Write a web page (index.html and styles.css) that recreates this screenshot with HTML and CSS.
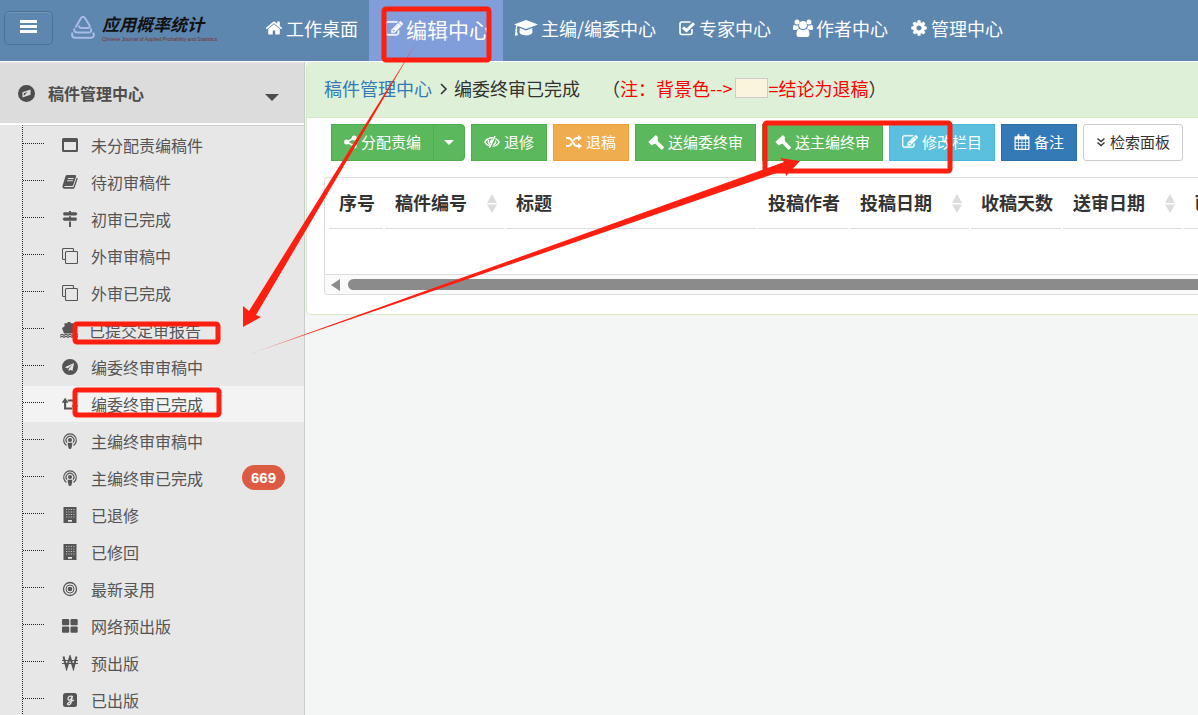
FILE: index.html
```html
<!DOCTYPE html>
<html lang="zh-CN">
<head>
  <meta charset="UTF-8" />
  <meta name="viewport" content="width=device-width, initial-scale=1.0" />
  <title>编辑中心 - 应用概率统计</title>
  <link rel="stylesheet" href="styles.css">
</head>
<body>
  <!-- 图标 -->
  <svg class="sprite" aria-hidden="true">
    <symbol id="i-home" viewBox="0 0 1792 1792"><path d="M1472 992v480q0 26-19 45t-45 19h-384v-384h-256v384h-384q-26 0-45-19t-19-45v-480q0-1 .5-3t.5-3l575-474 575 474q1 2 1 6zm223-69l-62 74q-8 9-21 11h-3q-13 0-21-7l-692-577-692 577q-12 8-24 7-13-2-21-11l-62-74q-8-10-7-23.5t11-21.5l719-599q32-26 76-26t76 26l244 204v-195q0-14 9-23t23-9h192q14 0 23 9t9 23v408l219 182q10 8 11 21.5t-7 23.5z"/></symbol>
    <symbol id="i-edit" viewBox="0 0 1792 1792"><path stroke="currentColor" stroke-width="40" d="M888 1184l116-116-152-152-116 116v56h96v96h56zm440-720q-16-16-33 1l-350 350q-17 17-1 33t33-1l350-350q17-17 1-33zm80 594v190q0 119-84.5 203.5t-203.5 84.5h-832q-119 0-203.5-84.5t-84.5-203.5v-832q0-119 84.5-203.5t203.5-84.5h832q63 0 117 25 15 7 18 23 3 17-9 29l-49 49q-14 14-32 8-23-6-45-6h-832q-66 0-113 47t-47 113v832q0 66 47 113t113 47h832q66 0 113-47t47-113v-126q0-13 9-22l64-64q15-15 35-7t20 29zm-96-738l288 288-672 672h-288v-288zm444 132l-92 92-288-288 92-92q28-28 68-28t68 28l152 152q28 28 28 68t-28 68z"/></symbol>
    <symbol id="i-cog" viewBox="0 0 1792 1792"><path d="M1152 896q0-106-75-181t-181-75-181 75-75 181 75 181 181 75 181-75 75-181zm512-109v222q0 12-8 23t-20 13l-185 28q-19 54-39 91 35 50 107 138 10 12 10 25t-9 23q-27 37-99 108t-94 71q-12 0-26-9l-138-108q-44 23-91 38-16 136-29 186-7 28-36 28h-222q-14 0-24.5-8.5t-11.5-21.5l-28-184q-49-16-90-37l-141 107q-10 9-25 9-14 0-25-11-126-114-165-168-7-10-7-23 0-12 8-23 15-21 51-66.5t54-70.5q-27-50-41-99l-183-27q-13-2-21-12.5t-8-23.5v-222q0-12 8-23t19-13l186-28q14-46 39-92-40-57-107-138-10-12-10-24 0-10 9-23 26-36 98.5-107.5t94.5-71.5q13 0 26 10l138 107q44-23 91-38 16-136 29-186 7-28 36-28h222q14 0 24.5 8.5t11.5 21.5l28 184q49 16 90 37l142-107q9-9 24-9 13 0 25 10 129 119 165 170 7 8 7 22 0 12-8 23-15 21-51 66.5t-54 70.5q26 50 41 98l183 28q13 2 21 12.5t8 23.5z"/></symbol>
    <symbol id="i-cap" viewBox="0 0 24 18"><path d="M12 1 24 5.500 12 10 4 7C3 7.500 2.900 9 2.900 10.200 3.600 10.700 3.600 11.500 3 12L3.800 16.500H.800L1.600 12C1 11.500 1 10.700 1.700 10.200 1.700 8.700 1.900 7.300 2.600 6.500L0 5.500ZM5.800 9 12 11.400 18.200 9 18.500 13C18.500 15 15.500 16.400 12 16.400S5.500 15 5.500 13Z"/></symbol>
    <symbol id="i-check" viewBox="0 0 18 18"><path d="M14 10V13.500A2 2 0 0 1 12 15.500H4A2 2 0 0 1 2 13.500V5A2 2 0 0 1 4 3H12.500" fill="none" stroke="currentColor" stroke-width="1.600"/><path d="M5 8.300 8.500 11.500 16 4.200" fill="none" stroke="currentColor" stroke-width="3"/></symbol>
    <symbol id="i-users" viewBox="0 0 20 18"><circle cx="10" cy="6" r="3.900"/><circle cx="4" cy="3" r="2.500"/><circle cx="16" cy="3" r="2.500"/><path d="M0 9.500C0 7 .5 5.800 1.500 5.800 3 7 4.500 6.600 5.300 6.300 5 8 5.700 9.200 6.200 9.800 5 9.800 4 10.500 3.500 11H1.500C.5 11 0 10.500 0 9.500ZM20 9.500C20 7 19.500 5.800 18.500 5.800 17 7 15.500 6.600 14.700 6.300 15 8 14.300 9.200 13.800 9.800 15 9.800 16 10.500 16.500 11H18.500C19.500 11 20 10.500 20 9.500ZM6.500 10C8.500 11.500 11.500 11.500 13.500 10 15.800 10 16.500 12.500 16.500 15.500 16.500 17 15.600 18 14.200 18H5.800C4.400 18 3.500 17 3.500 15.500 3.500 12.500 4.200 10 6.500 10Z"/></symbol>
    <symbol id="i-compass" viewBox="0 0 16 16"><path fill-rule="evenodd" d="M8 0A8 8 0 1 1 8 16 8 8 0 0 1 8 0ZM4.200 6.800V11.800L11.800 9.200V4.200ZM5.500 10V7.800L9 6.600Z"/></symbol>
    <symbol id="i-share" viewBox="0 0 14 14"><circle cx="2.800" cy="7" r="2.700"/><circle cx="11" cy="2.800" r="2.700"/><circle cx="11" cy="11.200" r="2.700"/><path d="M11 2.800 3 7 11 11.200" fill="none" stroke="currentColor" stroke-width="1.800"/></symbol>
    <symbol id="i-eye" viewBox="0 0 16 14"><path d="M6 11.300C3.500 10.600 1.700 8.600 .8 7 2.300 4.500 5 2.700 8 2.700L9.300 2.900M11.500 3.500C13.200 4.400 14.500 5.700 15.200 7 14 9.300 11.500 11.200 8.500 11.400" fill="none" stroke="currentColor" stroke-width="1.400"/><path d="M4.700 4.500C4 6.500 4.500 8.800 6.300 9.800M11.600 5.500C11.900 7.600 11 9.300 9.300 10" fill="none" stroke="currentColor" stroke-width="1.300"/><path d="M11 1 5.500 12.800M7.800 4.500 6 7.800" fill="none" stroke="currentColor" stroke-width="1.500"/></symbol>
    <symbol id="i-random" viewBox="0 0 16 14"><path d="M0 3H2.500C6.500 3 6.800 11 11 11H13M0 11H2.500C4 11 4.800 10 5.600 8.600M7.400 5.400C8.200 4 9.200 3 11 3H13" fill="none" stroke="currentColor" stroke-width="2"/><path d="M12 0 16 3 12 6ZM12 8 16 11 12 14Z"/></symbol>
    <symbol id="i-gavel" viewBox="0 0 16 16"><path d="M7.800 1 10.300 3.500 9.600 4.200 10 7.200 15.500 12.600C16 13.200 16 13.800 15.500 14.300L14.600 15.200C14 15.700 13.400 15.700 12.900 15.200L7.500 9.700 6.500 9.800 3.800 11.500 .4 8 1 7.300 6.900 1.900Z"/></symbol>
    <symbol id="i-calendar" viewBox="0 0 15 16"><path fill-rule="evenodd" d="M1 2.200H3V1Q3 0 4 0T5 1V2.200H10V1Q10 0 11 0T12 1V2.200H14Q15 2.200 15 3.200V15Q15 16 14 16H1Q0 16 0 15V3.200Q0 2.200 1 2.200ZM1.200 5.500V7.900H3.700V5.500ZM4.500 5.500V7.900H7.100V5.500ZM7.900 5.500V7.900H10.500V5.500ZM11.300 5.500V7.900H13.800V5.500ZM1.200 8.700V11.300H3.700V8.700ZM4.500 8.700V11.300H7.100V8.700ZM7.900 8.700V11.300H10.500V8.700ZM11.300 8.700V11.300H13.800V8.700ZM1.200 12.100V14.800H3.700V12.100ZM4.500 12.100V14.800H7.100V12.100ZM7.900 12.100V14.800H10.500V12.100ZM11.300 12.100V14.800H13.800V12.100Z"/></symbol>
    <symbol id="i-down" viewBox="0 0 10 10"><path d="M1.500 1.500 5 4.500 8.500 1.500M1.500 5.500 5 8.500 8.500 5.500" fill="none" stroke="currentColor" stroke-width="1.400"/></symbol>
    <symbol id="i-window" viewBox="0 0 16 16"><path fill-rule="evenodd" d="M1.500 1H14.500Q16 1 16 2.500V13.500Q16 15 14.500 15H1.500Q0 15 0 13.500V2.500Q0 1 1.500 1ZM2 5V13H14V5Z"/></symbol>
    <symbol id="i-book" viewBox="0 0 16 16"><path fill-rule="evenodd" d="M5 1H13Q14.500 1.200 14 2.800L11.300 11Q11 12 10 12H2.500Q1.500 12.500 3 13H11.500L14.800 3.500Q16 4 15.500 5.200L12.800 13.300Q12.300 14.800 11 14.800H2.500Q0 14.300 .5 11.800L3.500 2.200Q4 1 5 1ZM6 4 5.700 5H11.500L11.800 4ZM5.300 6.300 5 7.300H10.800L11.100 6.300Z"/></symbol>
    <symbol id="i-signs" viewBox="0 0 16 16"><path d="M7 0H9V1.200H14L15.500 2.700 14 4.400H2Q1.300 4.400 1.300 3.700V1.900Q1.300 1.200 2 1.200H7ZM7 5.200H9V6.400H14Q14.700 6.400 14.700 7.100V9Q14.700 9.700 14 9.700H2L.5 8.100 2 6.400H7ZM7 10.500H9V16H7Z"/></symbol>
    <symbol id="i-clone" viewBox="0 0 16 16"><path d="M3.500 11.500H1.500A1 1 0 0 1 .5 10.500V1.500A1 1 0 0 1 1.500 .5H10.500A1 1 0 0 1 11.500 1.500V3.500M4.500 3.500H14.500A1 1 0 0 1 15.500 4.500V14.500A1 1 0 0 1 14.500 15.500H4.500A1 1 0 0 1 3.500 14.500V4.500A1 1 0 0 1 4.500 3.500Z" fill="none" stroke="currentColor" stroke-width="1.100"/></symbol>
    <symbol id="i-ship" viewBox="0 0 18 16"><path d="M7.500 0H10.500V1.200H13.500V4.500L16 6 14 11.500H4L2 6 4.500 4.500V1.200H7.500Z"/><path d="M0 13.300 2 12.300 4 13.300 6 12.300 8 13.300 10 12.300 12 13.300 14 12.300 16 13.300 18 12.300M0 15.300 2 14.300 4 15.300 6 14.300 8 15.300 10 14.300 12 15.300 14 14.300 16 15.300 18 14.300" fill="none" stroke="currentColor" stroke-width="1.200"/></symbol>
    <symbol id="i-plane" viewBox="0 0 16 16"><path fill-rule="evenodd" d="M8 0A8 8 0 1 1 8 16 8 8 0 0 1 8 0ZM12 4 3 8.300 5.600 9.400 10.300 5.800 6.700 9.900V12.500L8.100 10.700 10.500 11.700Z"/></symbol>
    <symbol id="i-retweet" viewBox="0 0 18 14"><path d="M3.500 4V12H11.500M6.500 3H14.500V10" fill="none" stroke="currentColor" stroke-width="2.400"/><path d="M3.500 0 7.300 5.500H-.3ZM14.500 14 10.700 8.500H18.300Z"/></symbol>
    <symbol id="i-podcast" viewBox="0 0 16 16"><path d="M4.500 12.500A6.300 6.300 0 1 1 11.500 12.500M5 9.700A3.900 3.900 0 1 1 11 9.700" fill="none" stroke="currentColor" stroke-width="1.200"/><circle cx="8" cy="7" r="2"/><path d="M6.500 9.800H9.500Q10.500 9.800 10.300 11L9.500 15Q9.300 16 8 16T6.500 15L5.700 11Q5.500 9.800 6.500 9.800Z"/></symbol>
    <symbol id="i-building" viewBox="0 0 14 16"><path fill-rule="evenodd" d="M.5 0H13.500V16H.5ZM5 13V14.800H9V13Z"/><path d="M3 2.500H11.500M3 5H11.500M3 7.500H11.500M3 10H11.500" fill="none" stroke="#bdbdbd" stroke-width="1.200" stroke-dasharray="1.200 1.200"/></symbol>
    <symbol id="i-target" viewBox="0 0 16 16"><circle cx="8" cy="8" r="2.300"/><circle cx="8" cy="8" r="4" fill="none" stroke="currentColor"/><circle cx="8" cy="8" r="6.500" fill="none" stroke="currentColor" stroke-width="1.300"/></symbol>
    <symbol id="i-grid" viewBox="0 0 16 16"><rect y="1" width="7.200" height="6.200" rx="1"/><rect x="8.500" y="1" width="7.200" height="6.200" rx="1"/><rect y="8.500" width="7.200" height="6.200" rx="1"/><rect x="8.500" y="8.500" width="7.200" height="6.200" rx="1"/></symbol>
    <symbol id="i-won" viewBox="0 0 16 16"><path d="M1.500 1.500 4.600 13 8 2 11.400 13 14.500 1.500" fill="none" stroke="currentColor" stroke-width="2"/><path d="M0 5.500H16M0 8.500H16" fill="none" stroke="currentColor"/></symbol>
    <symbol id="i-gsquare" viewBox="0 0 16 16"><rect x="1" y="1" width="14" height="14" rx="2.500"/><path d="M10.500 4.500C8 3.200 5.800 5 6 7 6.300 9 9 8.500 9.500 6L10.500 4 9 10.500C8.500 13 6 13.500 5.500 12 5.500 10.500 9 9.500 12 8" fill="none" stroke="#e7e7e7" stroke-width="1.300"/></symbol>
    <symbol id="i-sort" viewBox="0 0 10 19"><path d="M5 0 10 9H0ZM0 10.500H10L5 19Z"/></symbol>
  </svg>

  <header class="navbar">
    <button class="menu-toggle" type="button" aria-label="菜单"><span></span><span></span><span></span></button>
    <a class="brand" href="#">
      <svg class="brand-mark" viewBox="0 0 24 24" aria-hidden="true">
        <path d="M4.500 12.500 10 3Q12 .5 14 3L18.500 10.500Q19.500 13 16.500 13H10Q7.500 12.800 8.500 10.500M3.500 13.500Q2.500 17.300 6 17.500H18Q21.500 17 19.500 13.500M1.500 17.500Q0 22.500 4 22.700H20Q24.500 22 22 17.500" fill="none" stroke="#a9bce8" stroke-width="2"/>
      </svg>
      <span class="brand-text">
        <span class="brand-name">应用概率统计</span>
        <span class="brand-sub">Chinese Journal of Applied Probability and Statistics</span>
      </span>
    </a>
    <nav class="nav">
      <a href="#"><svg class="icon"><use href="#i-home"/></svg>工作桌面</a>
      <a href="#" class="active"><svg class="icon"><use href="#i-edit"/></svg>编辑中心</a>
      <a href="#"><svg class="icon cap"><use href="#i-cap"/></svg>主编/编委中心</a>
      <a href="#"><svg class="icon"><use href="#i-check"/></svg>专家中心</a>
      <a href="#"><svg class="icon users"><use href="#i-users"/></svg>作者中心</a>
      <a href="#"><svg class="icon"><use href="#i-cog"/></svg>管理中心</a>
    </nav>
  </header>

  <div class="layout">
    <aside class="sidebar">
      <a class="side-title" href="#"><svg class="icon"><use href="#i-compass"/></svg>稿件管理中心<span class="caret"></span></a>
      <ul class="tree">
        <li><a href="#"><svg class="icon"><use href="#i-window"/></svg>未分配责编稿件</a></li>
        <li><a href="#"><svg class="icon"><use href="#i-book"/></svg>待初审稿件</a></li>
        <li><a href="#"><svg class="icon"><use href="#i-signs"/></svg>初审已完成</a></li>
        <li><a href="#"><svg class="icon"><use href="#i-clone"/></svg>外审审稿中</a></li>
        <li><a href="#"><svg class="icon"><use href="#i-clone"/></svg>外审已完成</a></li>
        <li><a href="#"><svg class="icon ship"><use href="#i-ship"/></svg>已提交定审报告</a></li>
        <li><a href="#"><svg class="icon"><use href="#i-plane"/></svg>编委终审审稿中</a></li>
        <li class="active"><a href="#"><svg class="icon"><use href="#i-retweet"/></svg>编委终审已完成</a></li>
        <li><a href="#"><svg class="icon"><use href="#i-podcast"/></svg>主编终审审稿中</a></li>
        <li><a href="#"><svg class="icon"><use href="#i-podcast"/></svg>主编终审已完成<span class="badge">669</span></a></li>
        <li><a href="#"><svg class="icon"><use href="#i-building"/></svg>已退修</a></li>
        <li><a href="#"><svg class="icon"><use href="#i-building"/></svg>已修回</a></li>
        <li><a href="#"><svg class="icon"><use href="#i-target"/></svg>最新录用</a></li>
        <li><a href="#"><svg class="icon"><use href="#i-grid"/></svg>网络预出版</a></li>
        <li><a href="#"><svg class="icon"><use href="#i-won"/></svg>预出版</a></li>
        <li><a href="#"><svg class="icon"><use href="#i-gsquare"/></svg>已出版</a></li>
      </ul>
    </aside>

    <main class="main">
      <section class="panel">
        <div class="panel-heading">
          <a href="#">稿件管理中心</a>
          <svg class="sep" viewBox="0 0 8 12"><path d="M1 1 6 6 1 11" fill="none" stroke="currentColor" stroke-width="1.600"/></svg>
          <span>编委终审已完成</span>
          <span class="note">（<em>注：背景色--&gt; <i class="swatch"></i>=结论为退稿</em>）</span>
        </div>

        <div class="toolbar">
          <div class="btn-group">
            <button type="button" class="btn success"><svg class="icon share"><use href="#i-share"/></svg>分配责编</button>
            <button type="button" class="btn success toggle" aria-label="更多"><span class="caret"></span></button>
          </div>
          <button type="button" class="btn success"><svg class="icon"><use href="#i-eye"/></svg>退修</button>
          <button type="button" class="btn warning"><svg class="icon"><use href="#i-random"/></svg>退稿</button>
          <button type="button" class="btn success"><svg class="icon"><use href="#i-gavel"/></svg>送编委终审</button>
          <button type="button" class="btn success"><svg class="icon"><use href="#i-gavel"/></svg>送主编终审</button>
          <button type="button" class="btn info"><svg class="icon"><use href="#i-edit"/></svg>修改栏目</button>
          <button type="button" class="btn primary"><svg class="icon"><use href="#i-calendar"/></svg>备注</button>
          <button type="button" class="btn default"><svg class="icon down"><use href="#i-down"/></svg>检索面板</button>
        </div>

        <div class="table-wrap">
          <table>
            <thead>
              <tr>
                <th>序号</th>
                <th class="sortable">稿件编号<svg><use href="#i-sort"/></svg></th>
                <th class="col-title">标题</th>
                <th>投稿作者</th>
                <th class="sortable">投稿日期<svg><use href="#i-sort"/></svg></th>
                <th>收稿天数</th>
                <th class="sortable">送审日期<svg><use href="#i-sort"/></svg></th>
                <th>已</th>
              </tr>
            </thead>
          </table>
          <div class="scrollbar"><span class="arrow"></span><span class="thumb"></span></div>
        </div>
      </section>
    </main>
  </div>

  <!-- 操作步骤标注 -->
  <svg class="marks" width="960" height="430" aria-hidden="true">
    <defs>
      <linearGradient id="fade1" gradientUnits="userSpaceOnUse" x1="418" y1="40" x2="390" y2="85"><stop offset="0" stop-color="#ff1f10" stop-opacity=".5"/><stop offset="1" stop-color="#ff1f10"/></linearGradient>
      <linearGradient id="fade2" gradientUnits="userSpaceOnUse" x1="250" y1="354" x2="320" y2="330"><stop offset="0" stop-color="#ff1f10" stop-opacity=".5"/><stop offset="1" stop-color="#ff1f10"/></linearGradient>
    </defs>
    <g fill="none" stroke="#ff1f10" stroke-width="5">
      <rect x="384" y="9" width="105" height="51" rx="2"/>
      <rect x="75" y="324" width="143" height="18" rx="2"/>
      <rect x="75" y="390" width="144" height="25" rx="2"/>
      <rect x="765" y="123" width="185" height="48" rx="2"/>
    </g>
    <path fill="url(#fade1)" d="M418 40 249 311 243 306V327L261 317 256 315Z"/>
    <path fill="url(#fade2)" d="M250 354 784 162 780 158 800 161 786 176 785 170Z"/>
  </svg>
</body>
</html>
```

FILE: styles.css
```css
* { box-sizing: border-box; }
body { margin: 0; min-height: 100vh; display: flex; flex-direction: column; overflow: hidden; background: #f4f6f6; color: #333; font-family: "Noto Sans CJK SC", "Open Sans", sans-serif; font-size: 16px; }
a { text-decoration: none; }
button { font-family: inherit; cursor: pointer; }
.sprite { position: absolute; width: 0; height: 0; }
.icon { width: 16px; height: 16px; flex: none; fill: currentColor; }

/* 顶部导航 */
.navbar { display: flex; height: 62px; background: #5e87b0; border-bottom: 1px solid #fff; }
.menu-toggle { display: flex; flex-direction: column; align-items: center; gap: 2px; width: 49px; height: 34px; margin: 11px 18px 0 4px; padding: 8px 0; background: none; border: 1px solid #4c7096; border-radius: 5px; box-shadow: inset 0 1px 0 #7396ba; }
.menu-toggle span { width: 17px; height: 3px; background: #fff; }
.brand { display: flex; width: 183px; padding-top: 12px; gap: 7px; }
.brand-mark { width: 24px; height: 24px; margin-top: 3px; }
.brand-text { display: flex; flex-direction: column; white-space: nowrap; }
.brand-name { color: #111; font-size: 17px; line-height: 24px; font-weight: bold; font-style: italic; }
.brand-sub { color: #7a2f22; font-family: "Liberation Sans", sans-serif; font-size: 5px; line-height: 6px; }
.nav { display: flex; }
.nav a { display: flex; align-items: center; gap: 3px; padding: 0 11px 6px; color: #fff; font-size: 18px; white-space: nowrap; }
.nav a.active { padding: 0 13px 4px 16px; background: #819dda; font-size: 21px; }
.nav .icon { width: 18px; height: 18px; }
.nav .cap { width: 24px; }
.nav .users { width: 20px; }

.layout { flex: 1; display: flex; }

/* 左侧菜单 */
.sidebar { flex: none; width: 305px; padding-top: 1px; background: #e7e7e7; border-right: 1px solid #c8cdcd; }
.side-title { display: flex; align-items: center; gap: 13px; height: 62px; padding: 0 25px 0 18px; background: #dcdcdc; border-bottom: 2px solid #fff; color: #4d4d4d; font-weight: bold; }
.side-title .icon { width: 17px; height: 17px; }
.caret { border: 4px solid transparent; border-top-color: currentColor; border-bottom: 0; }
.side-title .caret { margin: 8px 0 0 auto; border-width: 7px; border-bottom: 0; }
.tree { list-style: none; margin: 0 0 0 22px; padding: 1px 0 0; height: 589px; overflow: hidden; border-left: 1px dotted #222; border-top: 1px solid #cfcfcf; }
.tree li { height: 37px; padding-bottom: 1px; }
.tree a { display: flex; align-items: center; gap: 13px; height: 36px; padding: 0 19px 1px 0; color: #555; }
.tree a::before { content: ""; width: 21px; margin: 0 5px 3px 0; border-top: 1px dotted #222; }
.tree .active { background: #f3f3f3 content-box; }
.tree .ship { width: 18px; margin: 0 -2px; }
.badge { margin-left: auto; padding: 0 9px; border-radius: 13px; background: #de5b43; color: #fff; font: bold 15px/25px "Liberation Sans", sans-serif; }

/* 主面板 */
.main { flex: 1; min-width: 0; padding-left: 1px; }
.panel { background: #fff; border: solid #d6e9c6; border-width: 0 0 1px 1px; border-radius: 5px 0 0 5px; padding-bottom: 19px; }
.panel-heading { display: flex; align-items: center; height: 56px; padding: 0 17px 4px; background: #dff0d8; border-bottom: 1px solid #d6e9c6; border-radius: 5px 0 0; font-size: 18px; white-space: nowrap; }
.panel-heading a { color: #337ab7; }
.sep { width: 8px; height: 12px; margin: 2px 6px 0 8px; }
.note { display: flex; align-items: center; margin-left: 22px; }
.note em { display: flex; align-items: center; color: #f00; font-style: normal; }
.swatch { width: 33px; height: 20px; margin-left: 3px; background: #f9f5dc; border: 1px solid #ccc; }

.toolbar { display: flex; gap: 6px; padding: 6px 12px 16px 24px; }
.btn-group { display: flex; }
.btn { display: flex; align-items: center; gap: 4px; height: 37px; padding: 0 12px 2px; border: 1px solid; color: #fff; font-size: 15px; white-space: nowrap; }
.btn.success { background: #5cb85c; border-color: #4cae4c; }
.btn.warning { background: #f0ad4e; border-color: #eea236; }
.btn.info { background: #5bc0de; border-color: #46b8da; }
.btn.primary { background: #337ab7; border-color: #2e6da4; }
.btn.default { background: #fff; border-color: #ccc; border-radius: 3px; color: #333; }
.btn.toggle { margin-left: -1px; padding: 0 10px; border-radius: 0 4px 4px 0; }
.btn .caret { border-width: 5px; border-bottom: 0; }
.btn .share { width: 13px; }
.btn .down { width: 10px; height: 10px; }

.table-wrap { margin-left: 17px; overflow: hidden; border: 1px solid #ddd; border-right: 0; border-radius: 4px 0 0 4px; }
table { margin: 0 2px 43px; border-spacing: 2px; }
th { padding: 9px 8px 13px 10px; border-bottom: 1px solid #ddd; font-size: 18px; line-height: 26px; text-align: left; white-space: nowrap; }
.sortable svg { width: 10px; height: 19px; margin: 0 -1px -3px 20px; fill: #ddd; }
.col-title { min-width: 250px; }
.scrollbar { display: flex; align-items: center; gap: 8px; height: 20px; padding-left: 6px; background: #fafafa; border-top: 1px solid #ddd; }
.arrow { border: 6px solid transparent; border-left: 0; border-right: 9px solid #8b8b8b; }
.thumb { flex: 1; height: 11px; border-radius: 6px 0 0 6px; background: #8b8b8b; }

.marks { position: absolute; left: 0; top: 0; pointer-events: none; }
```
